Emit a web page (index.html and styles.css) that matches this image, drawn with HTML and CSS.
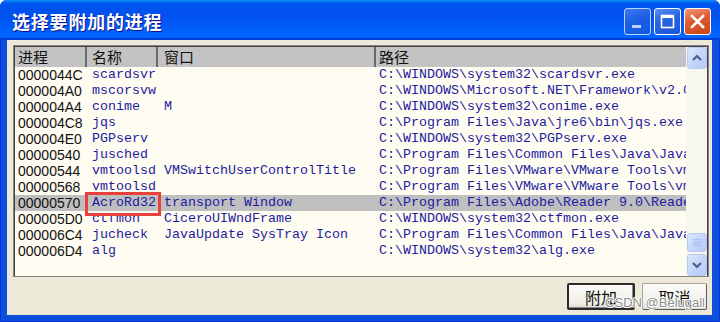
FILE: index.html
```html
<!DOCTYPE html>
<html lang="zh-CN">
<head>
  <meta charset="UTF-8" />
  <title>选择要附加的进程</title>
  <link rel="stylesheet" href="styles.css">
</head>
<body>
  <div class="window">
    <div class="titlebar">
      <span class="title">选择要附加的进程</span>
      <div class="controls">
        <button class="ctl ctl-min" aria-label="Minimize">
          <svg width="25" height="25" viewBox="0 0 25 25"><rect x="7" y="16" width="9" height="3" fill="#fff"/></svg>
        </button>
        <button class="ctl ctl-max" aria-label="Maximize">
          <svg width="25" height="25" viewBox="0 0 25 25"><rect x="6.5" y="6.5" width="12" height="12" fill="none" stroke="#fff" stroke-width="1.6"/><rect x="6" y="6" width="13" height="3" fill="#fff"/></svg>
        </button>
        <button class="ctl ctl-close" aria-label="Close">
          <svg width="25" height="25" viewBox="0 0 25 25"><path d="M7 7 L18 18 M18 7 L7 18" stroke="#fff" stroke-width="2.6" stroke-linecap="square"/></svg>
        </button>
      </div>
    </div>

    <div class="client">
      <div class="listbox">
        <div class="list-main">
          <div class="header">
            <div class="hcell c-id">进程</div>
            <div class="hcell c-name">名称</div>
            <div class="hcell c-win">窗口</div>
            <div class="hcell c-path">路径</div>
          </div>
          <div class="rows">
            <div class="row"><span class="c-id">0000044C</span><span class="c-name">scardsvr</span><span class="c-win"></span><span class="c-path">C:\WINDOWS\system32\scardsvr.exe</span></div>
            <div class="row"><span class="c-id">000004A0</span><span class="c-name">mscorsvw</span><span class="c-win"></span><span class="c-path">C:\WINDOWS\Microsoft.NET\Framework\v2.0.50727\mscorsvw.exe</span></div>
            <div class="row"><span class="c-id">000004A4</span><span class="c-name">conime</span><span class="c-win">M</span><span class="c-path">C:\WINDOWS\system32\conime.exe</span></div>
            <div class="row"><span class="c-id">000004C8</span><span class="c-name">jqs</span><span class="c-win"></span><span class="c-path">C:\Program Files\Java\jre6\bin\jqs.exe</span></div>
            <div class="row"><span class="c-id">000004E0</span><span class="c-name">PGPserv</span><span class="c-win"></span><span class="c-path">C:\WINDOWS\system32\PGPserv.exe</span></div>
            <div class="row"><span class="c-id">00000540</span><span class="c-name">jusched</span><span class="c-win"></span><span class="c-path">C:\Program Files\Common Files\Java\Java Update\jusched.exe</span></div>
            <div class="row"><span class="c-id">00000544</span><span class="c-name">vmtoolsd</span><span class="c-win">VMSwitchUserControlTitle</span><span class="c-path">C:\Program Files\VMware\VMware Tools\vmtoolsd.exe</span></div>
            <div class="row"><span class="c-id">00000568</span><span class="c-name">vmtoolsd</span><span class="c-win"></span><span class="c-path">C:\Program Files\VMware\VMware Tools\vmtoolsd.exe</span></div>
            <div class="row selected"><span class="c-id">00000570</span><span class="c-name marked">AcroRd32</span><span class="c-win">transport Window</span><span class="c-path">C:\Program Files\Adobe\Reader 9.0\Reader\AcroRd32.exe</span></div>
            <div class="row"><span class="c-id">000005D0</span><span class="c-name">ctfmon</span><span class="c-win">CiceroUIWndFrame</span><span class="c-path">C:\WINDOWS\system32\ctfmon.exe</span></div>
            <div class="row"><span class="c-id">000006C4</span><span class="c-name">jucheck</span><span class="c-win">JavaUpdate SysTray Icon</span><span class="c-path">C:\Program Files\Common Files\Java\Java Update\jucheck.exe</span></div>
            <div class="row"><span class="c-id">000006D4</span><span class="c-name">alg</span><span class="c-win"></span><span class="c-path">C:\WINDOWS\system32\alg.exe</span></div>
          </div>
        </div>
        <div class="scrollbar">
          <div class="sb-btn">
            <svg width="18" height="20" viewBox="0 0 18 20"><path d="M5 12 L9 8 L13 12" fill="none" stroke="#4d6185" stroke-width="2.2"/></svg>
          </div>
          <div class="sb-track"></div>
          <div class="sb-thumb">
            <svg width="18" height="17" viewBox="0 0 18 17"><path d="M5 5.5 H13 M5 7.5 H13 M5 9.5 H13 M5 11.5 H13" stroke="#aebff0" stroke-width="1"/></svg>
          </div>
          <div class="sb-btn">
            <svg width="18" height="20" viewBox="0 0 18 20"><path d="M5 8 L9 12 L13 8" fill="none" stroke="#4d6185" stroke-width="2.2"/></svg>
          </div>
        </div>
      </div>

      <div class="actions">
        <button class="btn btn-default">附加</button>
        <button class="btn btn-cancel">取消</button>
        <span class="watermark">CSDN @Belugall</span>
      </div>
    </div>
  </div>
</body>
</html>
```

FILE: styles.css
```css
* {
  margin: 0;
  padding: 0;
  box-sizing: border-box;
}

body {
  width: 720px;
  height: 322px;
  overflow: hidden;
  background: #ffffff;
  font-family: "Liberation Sans", "Noto Sans CJK SC", sans-serif;
}

.window {
  height: 322px;
  display: flex;
  flex-direction: column;
  background: #0b4fdc;
  border-radius: 7px 7px 0 0;
  box-shadow: inset 1px 0 #0831d9, inset -1px 0 #0831d9, inset 0 -1px #0831d9;
}

/* title bar */
.titlebar {
  height: 40px;
  display: flex;
  align-items: center;
  justify-content: space-between;
  padding: 0 9px 0 12px;
  border-radius: 7px 7px 0 0;
  background: linear-gradient(180deg, #0997ff, #0053ee 8%, #0050ee 40%, #0066ff 88%, #0066ff 93%, #005bff 95%, #003dd7 96%, #003dd7);
}

.title {
  color: #fff;
  font-family: "Noto Sans CJK SC", sans-serif;
  font-weight: 700;
  font-size: 18px;
  letter-spacing: 0.8px;
  text-shadow: 1px 1px #0f1089;
  margin-top: 2px;
}

.controls {
  display: flex;
  gap: 3px;
  margin-top: 2px;
}

.ctl {
  width: 27px;
  height: 27px;
  border: 1px solid #fff;
  border-radius: 3px;
  display: flex;
  align-items: center;
  justify-content: center;
  background: linear-gradient(160deg, #5b8cf2, #2763e0 45%, #1b55d6);
}

.ctl-min {
  opacity: 0.72;
}

.ctl-close {
  background: linear-gradient(160deg, #f19a7e, #e0582f 45%, #cc4517);
}

/* client area */
.client {
  flex: 1;
  margin: 0 8px 7px 7px;
  padding: 5px 3px 5px 6px;
  background: #ece9d8;
  display: flex;
  flex-direction: column;
}

.listbox {
  height: 232px;
  display: flex;
  border: 1px solid #848284;
  box-shadow: inset 1px 1px #404040;
  padding: 1px 0 0 1px;
  background: #fffcf1;
}

.list-main {
  flex: 1;
  overflow: hidden;
}

.header {
  height: 20px;
  display: flex;
  background: #c3c3c3;
}

.hcell {
  height: 20px;
  line-height: 20px;
  font-family: "Noto Sans CJK SC", sans-serif;
  font-size: 15px;
  color: #111;
  border-right: 2px solid #6a6a6a;
  white-space: nowrap;
  overflow: hidden;
}

.hcell.c-path {
  border-right: 0;
}

.c-id {
  width: 72px;
  padding-left: 3px;
}

.c-name {
  width: 71px;
  padding-left: 5px;
}

.c-win {
  width: 218px;
  padding-left: 6px;
}

.c-path {
  width: 310px;
  padding-left: 3px;
}

.row {
  height: 16px;
  display: flex;
  line-height: 16px;
  white-space: nowrap;
}

.row span {
  display: block;
  overflow: hidden;
  flex-shrink: 0;
}

.row .c-id {
  font-family: "Liberation Sans", sans-serif;
  font-size: 14px;
  color: #111;
}

.row .c-name,
.row .c-win,
.row .c-path {
  font-family: "Liberation Mono", monospace;
  font-size: 13.33px;
  color: #1c1ca0;
}

.row.selected {
  background: #bfbfbf;
}

.row .marked {
  position: relative;
  overflow: visible;
}

.row .marked::after {
  content: "";
  position: absolute;
  box-sizing: border-box;
  left: -2px;
  top: -3px;
  width: 76px;
  height: 24px;
  border: 3px solid #e8403a;
}

/* scrollbar */
.scrollbar {
  width: 22px;
  display: flex;
  flex-direction: column;
  padding: 0 1px;
  background: #f7f6ef;
  border-right: 1px solid #404040;
}

.sb-btn,
.sb-thumb {
  width: 20px;
  display: flex;
  align-items: center;
  justify-content: center;
  border: 1px solid #b8cbf4;
  border-radius: 3px;
  background: linear-gradient(135deg, #dde7fd, #c1d3fb 60%, #b5c9f7);
}

.sb-btn {
  height: 22px;
}

.sb-track {
  flex: 1;
}

.sb-thumb {
  height: 19px;
  margin-bottom: 2px;
}

/* buttons */
.actions {
  position: relative;
  display: flex;
  justify-content: flex-end;
  gap: 7px;
  margin-top: 6px;
  padding-right: 2px;
}

.btn {
  height: 27px;
  font-family: "Noto Sans CJK SC", sans-serif;
  font-size: 16px;
  color: #111;
  background: linear-gradient(180deg, #fbfbf8, #efeee7 80%, #dcdad0);
  border-radius: 2px;
}

.btn-default {
  width: 68px;
  border: 2px solid #2a2a2a;
  box-shadow: inset -1px -1px #8a8a8a;
}

.btn-cancel {
  width: 65px;
  border: 1px solid #a8a69a;
  border-right-color: #5a5a5a;
  border-bottom-color: #5a5a5a;
}

.watermark {
  position: absolute;
  right: 4px;
  bottom: 0;
  font-family: "Liberation Sans", sans-serif;
  font-size: 13px;
  color: #8d8d8d;
  text-shadow: 1px 0 #fff, -1px 0 #fff, 0 1px #fff, 0 -1px #fff;
}
```
